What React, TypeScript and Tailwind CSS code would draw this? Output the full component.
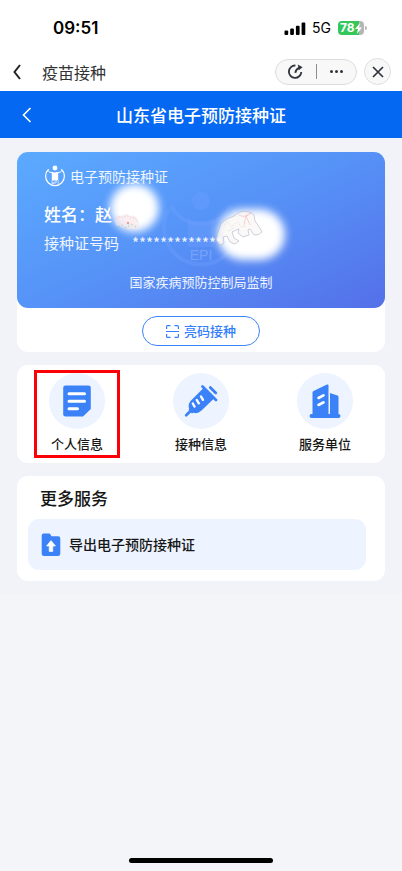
import type { ReactNode } from "react";

function StatusBar() {
  return (
    <div className="flex h-[52px] items-center justify-between pt-1 pr-[35px] pl-[53px] text-black">
      <span className="font-['Inter',sans-serif] text-[17px] leading-5 font-semibold">09:51</span>
      <div className="flex items-center">
        <svg className="mr-[6px] h-[13px] w-[22px]" viewBox="0 0 22 13" aria-hidden="true">
          <rect x="0.5" y="8.5" width="3.7" height="4.5" rx="1" />
          <rect x="6.2" y="6.5" width="3.7" height="6.5" rx="1" />
          <rect x="11.9" y="3.7" width="3.7" height="9.3" rx="1" />
          <rect x="17.6" y="0.5" width="3.7" height="12.5" rx="1" />
        </svg>
        <span className="mr-[7px] font-['Inter',sans-serif] text-[14px] leading-5">5G</span>
        <div className="flex h-[14px] w-[26px] items-center overflow-hidden rounded-[4px] bg-gradient-to-r from-[#34c759] from-80% to-[#b5b5b5] to-80% pl-[2px] font-['Inter',sans-serif] text-[12px] leading-[14px] font-bold text-white">
          78
          <svg className="h-[11px] w-[7px]" viewBox="0 0 7 11" fill="white" aria-hidden="true">
            <path d="M5 0 0 6h3L1.8 11 7 4.6H4Z" />
          </svg>
        </div>
        <span className="ml-px h-[4px] w-[2px] rounded-r-full bg-[#b5b5b5]" />
      </div>
    </div>
  );
}

function MiniProgramBar() {
  return (
    <div className="flex h-[39px] items-center px-[11px]">
      <button type="button" aria-label="返回" className="flex h-6 w-[31px] items-center">
        <svg className="h-4 w-3" viewBox="0 0 12 16" fill="none" stroke="#222" strokeWidth="2" aria-hidden="true">
          <path d="M9 1 3.5 8 9 15" />
        </svg>
      </button>
      <span className="text-[16px] leading-6 text-[#333]">疫苗接种</span>
      <div className="ml-auto flex h-[26px] w-[82px] items-center rounded-full border border-[#dedede] bg-[#f8f8f8]">
        <button type="button" aria-label="刷新" className="flex flex-1 justify-center">
          <svg className="h-4 w-4" viewBox="0 0 16 16" fill="none" stroke="#30343e" strokeWidth="1.8" aria-hidden="true">
            <path d="M7.4 1.500A6.200 6.200 0 1 0 13.300 8" />
            <path d="M7.300 8.900Q7.800 5.500 11 3.900" />
            <path d="M9.800.6 14.600 3.300 10.800 6.300Z" fill="#30343e" stroke="none" />
          </svg>
        </button>
        <span className="h-[15px] w-px bg-[#8e8e8e]" />
        <button type="button" aria-label="更多" className="flex flex-1 justify-center gap-[2px]">
          <span className="size-[3px] rounded-full bg-[#30343e]" />
          <span className="size-[3px] rounded-full bg-[#30343e]" />
          <span className="size-[3px] rounded-full bg-[#30343e]" />
        </button>
      </div>
      <button type="button" aria-label="关闭" className="ml-[7px] flex size-[27px] items-center justify-center rounded-full border border-[#dedede] bg-[#f8f8f8]">
        <svg className="size-3" viewBox="0 0 12 12" fill="none" stroke="#30343e" strokeWidth="1.7" aria-hidden="true">
          <path d="m1 1 10 10M11 1 1 11" />
        </svg>
      </button>
    </div>
  );
}

function Emblem({ className }: { className: string }) {
  return (
    <svg className={className} viewBox="0 0 22 22" aria-hidden="true">
      <circle cx="11" cy="3" r="2.4" fill="currentColor" />
      <path d="M7.8 6.8c2 .8 4.4.8 6.4 0V15H7.8Z" fill="currentColor" />
      <path d="M4.600 4.300a9.400 9.400 0 1 0 12.800 0" fill="none" stroke="currentColor" strokeWidth="1.2" />
      <path d="M3.700 5.200c1.300 2 2.700 2.400 4.500 2.400M18.300 5.200c-1.300 2-2.700 2.400-4.500 2.400" fill="none" stroke="currentColor" strokeWidth="1" />
      <text x="11" y="19.200" textAnchor="middle" fontSize="4.6" fontFamily="Liberation Sans, sans-serif" fill="currentColor">
        EPI
      </text>
    </svg>
  );
}

function Watermark() {
  return (
    <svg className="absolute top-[39px] left-1/2 h-[80px] w-[84px] -translate-x-1/2 text-[#73a1ff]/30" viewBox="0 0 84 80" aria-hidden="true">
      <circle cx="42" cy="10" r="9" fill="currentColor" />
      <path d="M29 28q13 5 26 0v28H29Z" fill="currentColor" />
      <path d="M12 15q10 18 30 18t30-18" fill="none" stroke="currentColor" strokeWidth="4" />
      <path d="M10 18a37 37 0 1 0 64 0" fill="none" stroke="currentColor" strokeWidth="4" />
      <text x="42" y="69" textAnchor="middle" fontSize="14" fontFamily="Liberation Sans, sans-serif" fill="#76a2fb">
        EPI
      </text>
    </svg>
  );
}

function PrivacySmudges() {
  return (
    <>
      <div className="absolute top-[32px] left-[93px] h-[48px] w-[49px] rounded-full bg-white blur-[4px]" />
      <svg className="absolute top-[60px] left-[96px] h-[20px] w-[30px]" viewBox="0 0 30 20" fill="none" aria-hidden="true">
        <path d="M2 8q2-6 7-4 4-4 8 0 6-2 8 5l2 8H15L3 13Z" fill="#f5e5e8" fillOpacity=".6" />
        <path d="M3 7q4-4 7-1 4-4 8 0 5-1 7 4" stroke="#edbac2" strokeOpacity=".5" strokeDasharray="2 1" />
        <path d="m5 15 4-2 4 3 5-4 5 3" stroke="#9bc7a6" strokeOpacity=".7" strokeDasharray="2 2" />
        <circle cx="15" cy="11" r="1.200" fill="#ed9da2" />
      </svg>
      <div className="absolute top-[57px] left-[200px] h-[51px] w-[68px] rounded-full bg-white blur-[4px]" />
      <svg className="absolute top-[55px] left-[199px] h-[41px] w-[48px]" viewBox="0 0 48 41" fill="none" aria-hidden="true">
        <path
          d="M5 17Q10 11 18 9l6-4q9-2 14 3l1 6q6 8 7 11-4 4-8 3l-4-6-2 1 1 5-6 2-5-4 1-4-7 3 2 6 5 3-4 3-5-2-3-6-4 1 1 6-4 2-4-5 2-7Z"
          fill="#faf7f4"
          fillOpacity=".7"
          stroke="#b6b9c8"
          strokeOpacity=".65"
        />
        <path d="M23 8q6 4 13-3l-6 4 4 9M30 8l-2 10" stroke="#f7c3ca" strokeOpacity=".8" />
        <path d="m8 18 4-3 3 5 5-4m-8 8 6-3m4-6 3 5 5-1" stroke="#ebdfd5" strokeDasharray="1 1" />
      </svg>
    </>
  );
}

function CertificateCard() {
  return (
    <section className="rounded-[11px] bg-white">
      <div className="relative h-[156px] overflow-hidden rounded-[11px] bg-[linear-gradient(155deg,#5baaff_0%,#5692f7_50%,#5470e9_100%)] px-[27px] pt-[13px] text-white">
        <Watermark />
        <div className="relative flex items-center gap-1 text-[14px] leading-[22px]">
          <Emblem className="size-[22px]" />
          <h2 className="text-white/90">电子预防接种证</h2>
        </div>
        <p className="relative mt-[14px] text-[17px] leading-[26px] font-medium">姓名：赵</p>
        <p className="relative mt-[7px] flex gap-[13px] text-[15px] leading-[18px] text-white/90">
          <span>接种证号码</span>
          <span>*************</span>
        </p>
        <p className="relative mt-5 text-center text-[13px] leading-5 text-white/90">国家疾病预防控制局监制</p>
        <PrivacySmudges />
      </div>
      <div className="flex justify-center pt-[8px] pb-[6px]">
        <button type="button" className="flex h-[30px] w-[118px] items-center justify-center gap-[5px] rounded-full border border-[#3d84fa] text-[13px] font-medium text-[#3480fb]">
          <svg className="size-[13px]" viewBox="0 0 13 13" fill="none" stroke="currentColor" strokeWidth="1.2" aria-hidden="true">
            <path d="M.6 4V1.600q0-1 1-1H4.500M8.500.6h2.900q1 0 1 1V4M.6 9v2.400q0 1 1 1h2.900M8.500 12.400h2.900q1 0 1-1V9M0 6.500h13" />
          </svg>
          亮码接种
        </button>
      </div>
    </section>
  );
}

function PersonIcon() {
  return (
    <svg className="size-8" viewBox="0 0 32 32" aria-hidden="true">
      <path d="M4.500.5h23q2.300 0 2.300 2.300V24L22 31.500H4.500q-2.300 0-2.300-2.300V2.800Q2.200.5 4.500.5Z" fill="#3b82f8" />
      <path d="M8 8.700h15.500M8 16.300h15.500M8 23.800h8.500" stroke="#fff" strokeWidth="3" strokeLinecap="round" />
    </svg>
  );
}

function SyringeIcon() {
  return (
    <svg className="size-[34px]" viewBox="0 0 34 34" aria-hidden="true">
      <path d="M19.500 4 7 16.500q-3.500 4-1.800 8.500l-.7 1 3.500 3.500 1.200-.8q4.500 1.500 8.300-2.200L30 14.500Z" fill="#3b82f8" />
      <path d="m6.500 27-4.300 4.300M18.500 2.500 32 16M26.300 3.500l5.500 5.500" stroke="#3b82f8" strokeWidth="2.800" strokeLinecap="round" />
      <path d="m8.800 19.500 1.700 3M12.800 16l2 3.300M17 12.500l2 3.300" stroke="#fff" strokeWidth="2.400" strokeLinecap="round" />
    </svg>
  );
}

function BuildingIcon() {
  return (
    <svg className="h-[34px] w-8" viewBox="0 0 32 34" aria-hidden="true">
      <path d="M3.500 8.500q0-1 1-1.500L18 .5q1.500-.5 1.500 1V30H3.500ZM21 9l7.500 2.500q1 .4 1 1.500v17H21Z" fill="#3b82f8" />
      <path d="M2.500 30h27q2 0 2 2t-2 2h-27q-2 0-2-2t2-2Z" fill="#3b82f8" />
      <path d="m9.500 14 5-2.700M9.500 21l5-2.700" stroke="#fff" strokeWidth="2.600" strokeLinecap="round" />
    </svg>
  );
}

function ServiceButton({ label, highlighted, children }: { label: string; highlighted?: boolean; children: ReactNode }) {
  return (
    <button
      type="button"
      className={`flex h-[88px] w-[86px] flex-col items-center border-[3px] text-[13px] leading-5 font-medium text-[#171717] ${highlighted ? "border-[#fb0007]" : "border-transparent"}`}
    >
      <span className="flex size-14 items-center justify-center rounded-full bg-[#edf4ff]">{children}</span>
      <span className="mt-[5px]">{label}</span>
    </button>
  );
}

export default function App() {
  return (
    <div className="flex min-h-screen flex-col bg-[#f4f5f8] font-['Noto_Sans_CJK_SC',sans-serif]">
      <header className="bg-white">
        <StatusBar />
        <MiniProgramBar />
      </header>
      <div className="grid h-[47px] grid-cols-[54px_1fr_54px] items-center bg-[#0468f2] text-white">
        <button type="button" aria-label="返回上一页" className="pl-[22px]">
          <svg className="h-4 w-[10px]" viewBox="0 0 10 16" fill="none" stroke="white" strokeWidth="1.6" aria-hidden="true">
            <path d="M8.500 1 1.500 8l7 7" />
          </svg>
        </button>
        <h1 className="text-center text-[17px] leading-6 font-medium">山东省电子预防接种证</h1>
      </div>
      <main className="flex flex-col gap-[13px] bg-[#f2f3f9] px-[17px] pt-[14px] pb-[13px]">
        <CertificateCard />
        <section className="flex justify-between rounded-[11px] bg-white px-[17px] py-[5px]">
          <ServiceButton label="个人信息" highlighted>
            <PersonIcon />
          </ServiceButton>
          <ServiceButton label="接种信息">
            <SyringeIcon />
          </ServiceButton>
          <ServiceButton label="服务单位">
            <BuildingIcon />
          </ServiceButton>
        </section>
        <section className="rounded-[11px] bg-white pt-[9px] pr-[19px] pb-[11px] pl-[11px]">
          <h2 className="pl-[12px] text-[17px] leading-[26px] font-medium text-[#171717]">更多服务</h2>
          <button type="button" className="mt-2 flex h-[51px] w-full items-center gap-2 rounded-[11px] bg-[#edf4ff] pl-[13px] text-[14px] font-medium text-[#171717]">
            <svg className="h-6 w-5" viewBox="0 0 20 24" aria-hidden="true">
              <path d="M2.500.5H8q1 0 1.500 1l1 1.700H17q2.300 0 2.300 2.300v15.300q0 2.300-2.300 2.300H3Q.7 23.100.7 20.800V2.500q0-2 1.800-2Z" fill="#3b82f8" />
              <path d="M10 7.500 5.500 13h2.700v5.500h3.600V13h2.700Z" fill="#fff" stroke="#fff" strokeWidth=".6" strokeLinejoin="round" />
            </svg>
            导出电子预防接种证
          </button>
        </section>
      </main>
      <footer className="mt-auto flex justify-center pb-[8px]">
        <div className="h-[5px] w-[144px] rounded-full bg-black" />
      </footer>
    </div>
  );
}
